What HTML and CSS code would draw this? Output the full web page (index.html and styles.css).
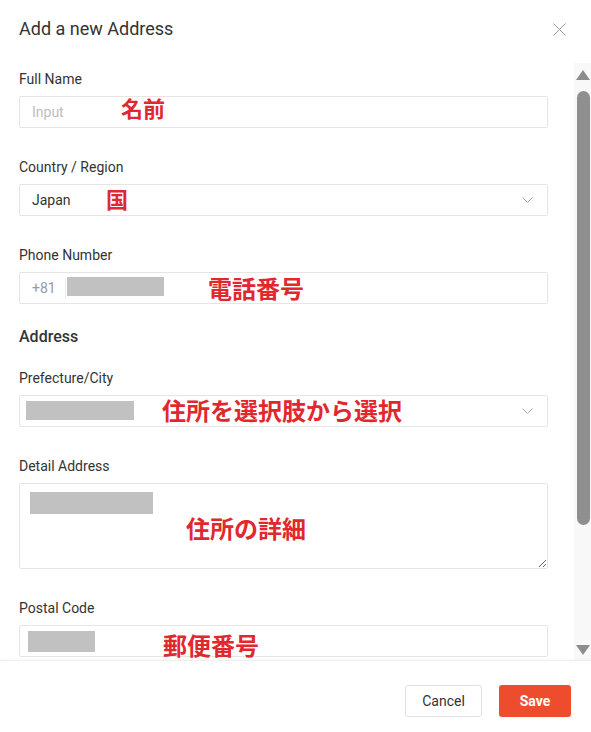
FILE: index.html
```html
<!DOCTYPE html>
<html lang="en">
<head>
    <meta charset="UTF-8">
    <meta name="viewport" content="width=device-width, initial-scale=1.0">
    <title>Add a new Address</title>
    <link rel="stylesheet" href="styles.css">
</head>
<body>

    <div class="modal">
        <div class="modal-header">
            <h1 class="modal-title">Add a new Address</h1>
            <button class="close-btn" aria-label="Close">
                <svg width="13" height="13" viewBox="0 0 13 13">
                    <path d="M0.5 0.5 L12.5 12.5 M12.5 0.5 L0.5 12.5" stroke="#999" stroke-width="1" fill="none"/>
                </svg>
            </button>
        </div>

        <div class="modal-body">
            <div class="form-scroll">
                <div class="field">
                    <label class="field-label">Full Name</label>
                    <div class="control">
                        <input class="input" type="text" placeholder="Input">
                        <span class="note note-name">名前</span>
                    </div>
                </div>

                <div class="field">
                    <label class="field-label">Country / Region</label>
                    <div class="control">
                        <div class="input select">
                            <span>Japan</span>
                            <svg class="chevron" width="11" height="6" viewBox="0 0 11 6">
                                <polyline points="0.5,0.5 5.5,5.5 10.5,0.5" stroke="#aaa" stroke-width="1" fill="none"/>
                            </svg>
                        </div>
                        <span class="note note-country">国</span>
                    </div>
                </div>

                <div class="field">
                    <label class="field-label">Phone Number</label>
                    <div class="control">
                        <div class="input phone">
                            <span class="phone-prefix">+81</span>
                            <span class="phone-divider"></span>
                        </div>
                        <span class="redact redact-phone"></span>
                        <span class="note note-phone">電話番号</span>
                    </div>
                </div>

                <h2 class="section-title">Address</h2>

                <div class="field">
                    <label class="field-label">Prefecture/City</label>
                    <div class="control">
                        <div class="input select">
                            <span></span>
                            <svg class="chevron" width="11" height="6" viewBox="0 0 11 6">
                                <polyline points="0.5,0.5 5.5,5.5 10.5,0.5" stroke="#aaa" stroke-width="1" fill="none"/>
                            </svg>
                        </div>
                        <span class="redact redact-city"></span>
                        <span class="note note-city">住所を選択肢から選択</span>
                    </div>
                </div>

                <div class="field">
                    <label class="field-label">Detail Address</label>
                    <div class="control">
                        <textarea class="input textarea"></textarea>
                        <span class="redact redact-detail"></span>
                        <span class="note note-detail">住所の詳細</span>
                    </div>
                </div>

                <div class="field">
                    <label class="field-label">Postal Code</label>
                    <div class="control">
                        <input class="input" type="text">
                        <span class="redact redact-postal"></span>
                        <span class="note note-postal">郵便番号</span>
                    </div>
                </div>
            </div>

            <div class="scrollbar">
                <span class="scroll-arrow up"></span>
                <span class="scroll-thumb"></span>
                <span class="scroll-arrow down"></span>
            </div>
        </div>

        <div class="modal-footer">
            <button class="btn btn-cancel">Cancel</button>
            <button class="btn btn-save">Save</button>
        </div>
    </div>

</body>
</html>
```

FILE: styles.css
```css
body {
    margin: 0;
    padding: 0;
    background: #fff;
    font-family: Roboto, "Noto Sans CJK JP", sans-serif;
    color: #333;
}
.modal {
    width: 591px;
    height: 732px;
    display: flex;
    flex-direction: column;
    background: #fff;
}
.modal-header {
    display: flex;
    justify-content: space-between;
    align-items: flex-start;
    height: 63px;
    box-sizing: border-box;
    padding: 19px 25px 0 19px;
}
.modal-title {
    margin: 0;
    font-size: 18px;
    line-height: 20px;
    font-weight: 400;
    color: #333;
}
.close-btn {
    border: none;
    background: none;
    padding: 0;
    margin-top: 4px;
    width: 13px;
    height: 13px;
    cursor: pointer;
}
.close-btn svg {
    display: block;
}
.modal-body {
    display: flex;
    height: 597px;
}
.form-scroll {
    flex: 1;
    overflow: hidden;
    padding: 7px 26px 0 19px;
}
.field + .field {
    margin-top: 30px;
}
.field-label {
    display: block;
    font-size: 14px;
    line-height: 18px;
    color: #333;
    margin-bottom: 8px;
}
.section-title {
    margin: 23px 0 22px;
    font-size: 16px;
    line-height: 20px;
    font-weight: 500;
    color: #333;
}
.control {
    position: relative;
}
.input {
    display: block;
    width: 100%;
    height: 32px;
    box-sizing: border-box;
    margin: 0;
    padding: 0 14px 0 12px;
    border: 1px solid #e5e5e5;
    border-radius: 2px;
    background: #fff;
    font-family: Roboto, sans-serif;
    font-size: 14px;
    color: #333;
    outline: none;
}
.input::placeholder {
    color: #bdbdbd;
}
.select {
    display: flex;
    align-items: center;
    justify-content: space-between;
}
.chevron {
    display: block;
}
.phone {
    display: flex;
    align-items: center;
}
.phone-prefix {
    color: #999;
}
.phone-divider {
    width: 1px;
    height: 19px;
    margin-left: 9px;
    background: #e8e8e8;
}
.textarea {
    height: 86px;
    resize: vertical;
    padding: 8px 12px;
}
.redact {
    position: absolute;
    background: #c1c1c1;
}
.redact-phone {
    left: 48px;
    top: 5px;
    width: 97px;
    height: 19px;
}
.redact-city {
    left: 7px;
    top: 6px;
    width: 108px;
    height: 19px;
}
.redact-detail {
    left: 11px;
    top: 9px;
    width: 123px;
    height: 22px;
}
.redact-postal {
    left: 9px;
    top: 6px;
    width: 67px;
    height: 21px;
}
.note {
    position: absolute;
    font-family: "Noto Sans CJK JP", sans-serif;
    font-weight: 700;
    font-size: 24px;
    line-height: 1;
    color: #e1282f;
    white-space: nowrap;
    pointer-events: none;
}
.note-name {
    left: 102px;
    top: 0;
    font-size: 22px;
}
.note-country {
    left: 87px;
    top: 3px;
    font-size: 22px;
}
.note-phone {
    left: 189px;
    top: 4px;
}
.note-city {
    left: 143px;
    top: 3px;
}
.note-detail {
    left: 167px;
    top: 33px;
}
.note-postal {
    left: 144px;
    top: 8px;
}
.scrollbar {
    width: 17px;
    box-sizing: border-box;
    padding: 7px 1px 5px 2px;
    background: #f8f8f8;
    display: flex;
    flex-direction: column;
}
.scroll-arrow {
    width: 0;
    height: 0;
    border-left: 7px solid transparent;
    border-right: 7px solid transparent;
}
.scroll-arrow.up {
    border-bottom: 10px solid #8c8c8c;
}
.scroll-arrow.down {
    margin-top: auto;
    border-top: 10px solid #8c8c8c;
}
.scroll-thumb {
    margin: 11px 0 0 1px;
    width: 13px;
    height: 434px;
    border-radius: 7px;
    background: #8f8f8f;
}
.modal-footer {
    flex: 1;
    display: flex;
    justify-content: flex-end;
    align-items: flex-start;
    gap: 17px;
    padding: 24px 20px 0;
    border-top: 1px solid #efefef;
    box-shadow: 0 -1px 2px rgba(0, 0, 0, 0.03);
}
.btn {
    height: 32px;
    border-radius: 3px;
    font-family: Roboto, sans-serif;
    font-size: 14px;
    cursor: pointer;
}
.btn-cancel {
    width: 77px;
    background: #fff;
    border: 1px solid #e2e2e2;
    color: #333;
}
.btn-save {
    width: 72px;
    background: #ee4d2d;
    border: none;
    color: #fff;
    font-weight: 700;
}
```
